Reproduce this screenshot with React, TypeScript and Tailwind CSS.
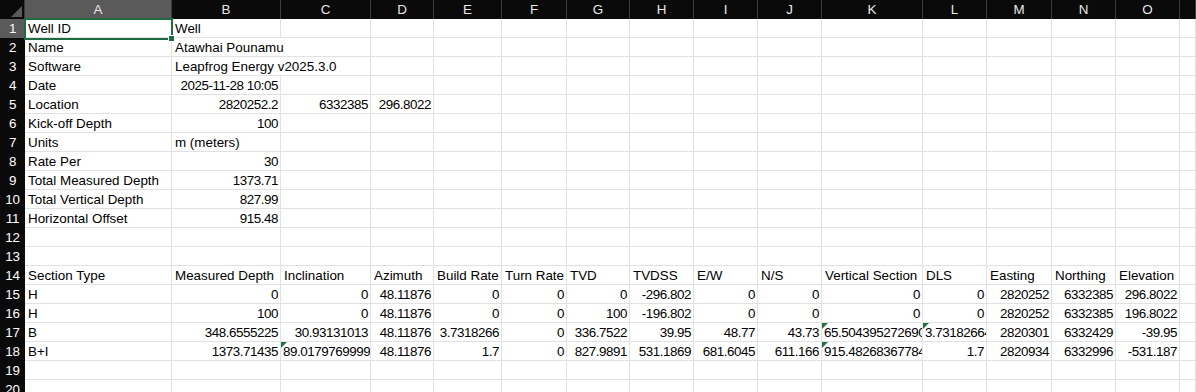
import React from "react";

type Cell = {
  v: string;
  r?: boolean; // right aligned
  ovf?: boolean; // text spills into next empty cell
  tri?: boolean; // number stored as text marker
};

const COLS = ["A", "B", "C", "D", "E", "F", "G", "H", "I", "J", "K", "L", "M", "N", "O", ""];

const L = (v: string, ovf = false): Cell => ({ v, ovf });
const N = (v: string): Cell => ({ v, r: true });
const T = (v: string): Cell => ({ v, tri: true });
const E: Cell = { v: "" };

const rows: Cell[][] = [
  [L("Well ID"), L("Well")],
  [L("Name"), L("Atawhai Pounamu", true)],
  [L("Software"), L("Leapfrog Energy v2025.3.0", true)],
  [L("Date"), N("2025-11-28 10:05")],
  [L("Location"), N("2820252.2"), N("6332385"), N("296.8022")],
  [L("Kick-off Depth"), N("100")],
  [L("Units"), L("m (meters)")],
  [L("Rate Per"), N("30")],
  [L("Total Measured Depth"), N("1373.71")],
  [L("Total Vertical Depth"), N("827.99")],
  [L("Horizontal Offset"), N("915.48")],
  [],
  [],
  [
    L("Section Type"),
    L("Measured Depth"),
    L("Inclination"),
    L("Azimuth"),
    L("Build Rate"),
    L("Turn Rate"),
    L("TVD"),
    L("TVDSS"),
    L("E/W"),
    L("N/S"),
    L("Vertical Section"),
    L("DLS"),
    L("Easting"),
    L("Northing"),
    L("Elevation"),
  ],
  [
    L("H"), N("0"), N("0"), N("48.11876"), N("0"), N("0"), N("0"), N("-296.802"),
    N("0"), N("0"), N("0"), N("0"), N("2820252"), N("6332385"), N("296.8022"),
  ],
  [
    L("H"), N("100"), N("0"), N("48.11876"), N("0"), N("0"), N("100"), N("-196.802"),
    N("0"), N("0"), N("0"), N("0"), N("2820252"), N("6332385"), N("196.8022"),
  ],
  [
    L("B"), N("348.6555225"), N("30.93131013"), N("48.11876"), N("3.7318266"), N("0"),
    N("336.7522"), N("39.95"), N("48.77"), N("43.73"), T("65.504395272690096"),
    T("3.7318266478"), N("2820301"), N("6332429"), N("-39.95"),
  ],
  [
    L("B+I"), N("1373.71435"), T("89.0179769999"), N("48.11876"), N("1.7"), N("0"),
    N("827.9891"), N("531.1869"), N("681.6045"), N("611.166"), T("915.482683677843"),
    N("1.7"), N("2820934"), N("6332996"), N("-531.187"),
  ],
  [],
  [],
];

const grid =
  "grid grid-cols-[25px_147px_109px_90px_63px_68px_65px_63px_64px_64px_64px_101px_64px_65px_64px_64px_1fr]";

const SheetCell = ({ c }: { c: Cell }) => {
  if (c.ovf) {
    return (
      <div className="relative h-[19px] border-r border-b border-[#e1e1e1]">
        <span className="absolute left-0 top-0 z-10 h-[18px] bg-white pl-[3px] pr-[1px] leading-[20px] whitespace-nowrap">
          {c.v}
        </span>
      </div>
    );
  }
  const numeric = c.r || c.tri;
  return (
    <div
      className={`relative h-[19px] overflow-hidden border-r border-b border-[#e1e1e1] leading-[20px] whitespace-nowrap ${
        c.r ? "pl-[3px] pr-[2px] text-right" : "px-[3px] text-left"
      } ${numeric ? "tracking-[-0.45px]" : ""} ${c.tri ? "pl-[2px] pr-0" : ""}`}
    >
      {c.tri && (
        <span className="absolute left-0 top-0 h-0 w-0 border-t-[6px] border-r-[6px] border-t-[#207245] border-r-transparent" />
      )}
      {c.v}
    </div>
  );
};

export default function App() {
  return (
    <div
      className="relative h-[392px] w-[1196px] overflow-hidden bg-white text-[13.4px] text-black"
      style={{ fontFamily: '"Liberation Sans", Arial, sans-serif' }}
    >
      {/* column letters */}
      <div className={`${grid} h-[19px] bg-[#0a0a0a] text-[#e8e8e8]`}>
        <div className="relative h-[19px] border-r border-[#3c3c3c]">
          <span className="absolute right-[2px] bottom-[2px] h-0 w-0 border-b-[11px] border-l-[11px] border-b-[#5a5a5a] border-l-transparent" />
        </div>
        {COLS.map((col, i) => (
          <div
            key={i}
            className={`h-[19px] border-r border-[#3c3c3c] text-center leading-[20px] ${
              col === "A" ? "bg-[#5a5a5a]" : ""
            }`}
          >
            {col}
          </div>
        ))}
      </div>

      {rows.map((row, ri) => (
        <div key={ri} className={grid}>
          <div
            className={`h-[19px] text-center leading-[20px] tracking-[-0.3px] text-white ${
              ri === 0 ? "bg-[#5a5a5a]" : "bg-[#0a0a0a]"
            }`}
          >
            {ri + 1}
          </div>
          {COLS.map((_, ci) => (
            <SheetCell key={ci} c={row[ci] ?? E} />
          ))}
        </div>
      ))}

      {/* active cell A1 */}
      <div className="pointer-events-none absolute left-[24px] top-[18px] z-20 h-[22px] w-[149px] border-2 border-[#1e6b41]" />
      <div className="pointer-events-none absolute left-[168px] top-[35px] z-30 h-[7px] w-[7px] border border-white bg-[#1e6b41]" />
    </div>
  );
}
